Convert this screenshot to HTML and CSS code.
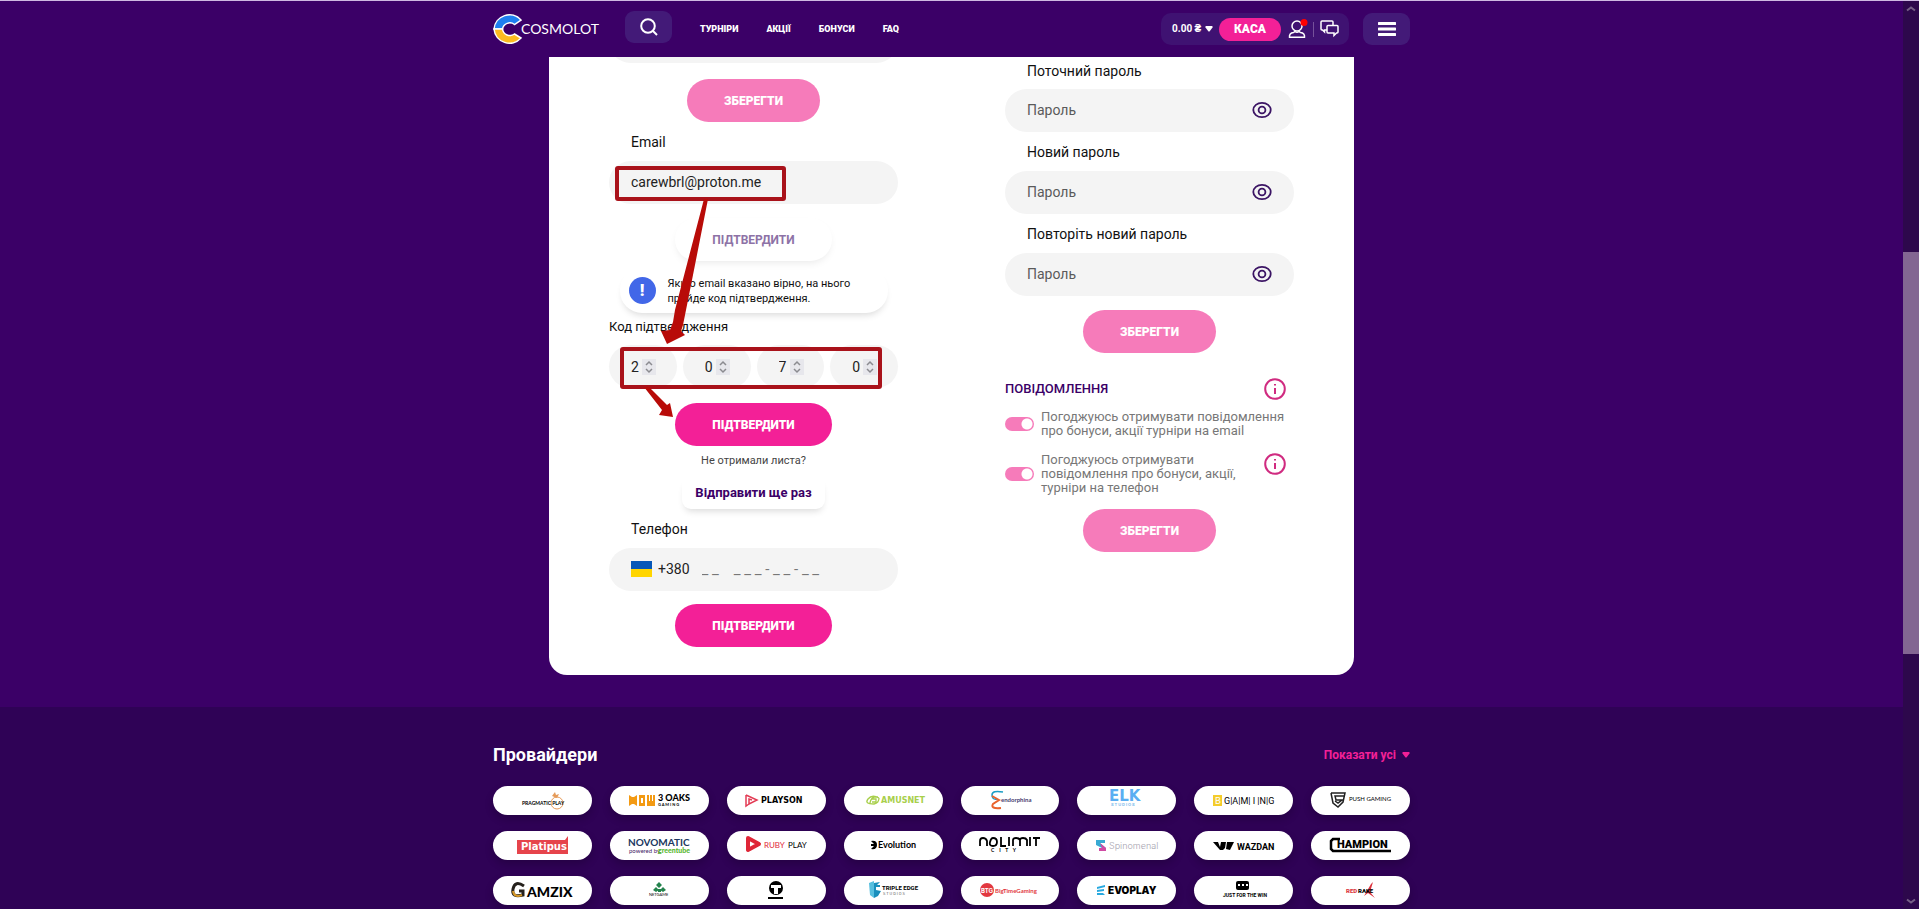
FILE: index.html
```html
<!DOCTYPE html>
<html lang="uk">
<head>
<meta charset="utf-8">
<title>Cosmolot</title>
<link rel="stylesheet" href="styles.css">
</head>
<body>
<svg class="sprite" aria-hidden="true">
  <symbol id="eye" viewBox="0 0 20 18"><ellipse cx="10" cy="9" rx="8.7" ry="7.2"/><circle cx="10" cy="9" r="3.4"/></symbol>
  <symbol id="info" viewBox="0 0 22 22"><circle cx="11" cy="11" r="9.8"/><path d="M11 10v6M11 6v1.6"/></symbol>
  <symbol id="spin" viewBox="0 0 14 16"><path d="M4 6l3-3 3 3M4 10l3 3 3-3"/></symbol>
</svg>
<header class="header">
  <div class="wrap header-row">
    <a class="logo" href="#">
      <svg width="30" height="34" viewBox="0 0 30 34"><path d="M28 8A15.500 15.500 0 0 0 1 17H9.500A7.500 7.500 0 0 1 21.500 12.500Z" fill="#1e7ff0" stroke="#fff"/><path d="M28 26A15.500 15.500 0 0 1 1 17H9.500A7.500 7.500 0 0 0 21.500 22Z" fill="#fdbb1f" stroke="#fff"/></svg>
      <span>COSMOLOT</span>
    </a>
    <button class="search" aria-label="Пошук"><svg width="18" height="18" viewBox="0 0 18 18"><circle cx="8" cy="8" r="6.800"/><path d="M13 13l4 4"/></svg></button>
    <nav class="nav"><a href="#">ТУРНІРИ</a><a href="#">АКЦІЇ</a><a href="#">БОНУСИ</a><a href="#">FAQ</a></nav>
    <div class="wallet">
      <button class="balance">0.00 ₴ <svg width="8" height="6" viewBox="0 0 8 6"><path d="M1 0H7Q8 0 7.500 1.500L4.500 5.500H3.500L.5 1.500Q0 0 1 0" fill="#fff"/></svg></button>
      <button class="cash">КАСА</button>
      <a class="user" href="#" aria-label="Профіль"><svg width="20" height="20" viewBox="0 0 20 20"><circle cx="9" cy="7" r="5"/><path d="M1.500 18.200H16.500Q17 14 12.500 13.500L11 12.500Q9 14 7 12.500L5.500 13.500Q1 14 1.500 18.200Z"/><circle class="dot" cx="16" cy="3.500" r="3.500"/></svg></a>
      <span class="divider"></span>
      <a class="chat" href="#" aria-label="Чат"><svg width="20" height="18" viewBox="0 0 20 18"><path d="M7 10H4.500V12L2.500 10H2Q1 10 1 9V2Q1 1 2 1H12Q13 1 13 2V5"/><path d="M8 5.500H17Q18 5.500 18 6.500V12Q18 13 17 13H16.500L14 15.500V13H8Q7 13 7 12V6.500Q7 5.500 8 5.500Z"/></svg></a>
    </div>
    <button class="menu" aria-label="Меню"><svg width="18" height="14" viewBox="0 0 18 14"><path d="M1 1.500H17M1 7H17M1 12.500H17"/></svg></button>
  </div>
</header>

<div class="page">
<main>
  <div class="card">
    <form class="col">
      <input class="field" aria-label="Дата народження">
      <button type="button" class="btn soft save">ЗБЕРЕГТИ</button>
      <label class="label" for="email">Email</label>
      <input class="field" id="email" type="email" value="carewbrl@proton.me">
      <button type="button" class="btn ghost" disabled>ПІДТВЕРДИТИ</button>
      <div class="alert"><span class="alert-icon">!</span><p>Якщо email вказано вірно, на нього прийде код підтвердження.</p></div>
      <div class="code-label" id="code-label">Код підтвердження</div>
      <div class="code" role="group" aria-labelledby="code-label">
        <span class="digit"><input type="number" aria-label="Цифра 1" value="2"><svg><use href="#spin"/></svg></span>
        <span class="digit"><input type="number" aria-label="Цифра 2" value="0"><svg><use href="#spin"/></svg></span>
        <span class="digit"><input type="number" aria-label="Цифра 3" value="7"><svg><use href="#spin"/></svg></span>
        <span class="digit"><input type="number" aria-label="Цифра 4" value="0"><svg><use href="#spin"/></svg></span>
      </div>
      <button type="button" class="btn confirm">ПІДТВЕРДИТИ</button>
      <p class="hint">Не отримали листа?</p>
      <button type="button" class="resend">Відправити ще раз</button>
      <label class="label" for="phone">Телефон</label>
      <div class="field phone">
        <svg width="21" height="16" viewBox="0 0 21 16"><path fill="#0757b8" d="M0 0H21V8H0Z"/><path fill="#ffd500" d="M0 8H21V16H0Z"/></svg>
        <span>+380</span>
        <input id="phone" type="tel" placeholder="_ _ &nbsp; &nbsp;_ _ _ - _ _ - _ _">
      </div>
      <button type="button" class="btn verify">ПІДТВЕРДИТИ</button>
      <svg class="marks" width="289" height="430" viewBox="0 0 289 430" aria-hidden="true">
        <rect x="8" y="168" width="167" height="31" rx="1"/>
        <rect x="13" y="349" width="258" height="38" rx="1"/>
        <path d="M95 199H99L84 275 74 325 72 331 76 335 58 344 52 331 61 330 64 322 66 310Z"/>
        <path d="M35 387L40 387 58 405 61 403 64 417 50 415 53 410Z"/>
      </svg>
    </form>

    <form class="col security">
      <label class="label" for="p1">Поточний пароль</label>
      <div class="field pass"><input id="p1" type="password" placeholder="Пароль"><button type="button" aria-label="Показати"><svg><use href="#eye"/></svg></button></div>
      <label class="label" for="p2">Новий пароль</label>
      <div class="field pass"><input id="p2" type="password" placeholder="Пароль"><button type="button" aria-label="Показати"><svg><use href="#eye"/></svg></button></div>
      <label class="label" for="p3">Повторіть новий пароль</label>
      <div class="field pass"><input id="p3" type="password" placeholder="Пароль"><button type="button" aria-label="Показати"><svg><use href="#eye"/></svg></button></div>
      <button type="button" class="btn soft update">ЗБЕРЕГТИ</button>
      <div class="notice-head"><h2>ПОВІДОМЛЕННЯ</h2><button type="button" class="info" aria-label="Інформація"><svg><use href="#info"/></svg></button></div>
      <div class="notice wide"><input type="checkbox" id="n1" checked><label for="n1">Погоджуюсь отримувати повідомлення про бонуси, акції турніри на email</label></div>
      <div class="notice"><input type="checkbox" id="n2" checked><label for="n2">Погоджуюсь отримувати повідомлення про бонуси, акції, турніри на телефон</label><button type="button" class="info" aria-label="Інформація"><svg><use href="#info"/></svg></button></div>
      <button type="button" class="btn soft update">ЗБЕРЕГТИ</button>
    </form>
  </div>
</main>

<section class="providers">
  <div class="wrap">
    <div class="providers-head"><h1>Провайдери</h1><a href="#">Показати усі <svg width="8" height="6" viewBox="0 0 8 6"><path d="M1 0H7Q8 0 7.500 1.500L4.500 5.500H3.500L.5 1.500Q0 0 1 0" fill="#f32097"/></svg></a></div>
    <div class="brands">
      <a href="#"><svg viewBox="0 0 99 29"><circle cx="64" cy="17" r="6" fill="none" stroke="#e59a58"/><path d="M59 10L62 6 63 9 66 8 64 12Z" fill="#e59a58"/><text x="29" y="19" class="lato b" font-size="5">PRAGMATIC PLAY</text></svg></a>
      <a href="#"><svg viewBox="0 0 99 29"><path d="M19 9L22 11H24L27 9V20L24 18H22L19 20ZM29 9H35V20H29ZM37 9H45V20H37Z" fill="#f39a13"/><path d="M31 12V17H33V12ZM39 9V15H40V9ZM42 9V15H43V9Z" fill="#fff"/><text x="48" y="15" class="lato x" font-size="9">3 OAKS</text><text x="48" y="20" class="lato b" font-size="4">G A M I N G</text></svg></a>
      <a href="#"><svg viewBox="0 0 99 29"><path d="M19 9L30 14 22 18V13L25 14M19 9V20L22 18" fill="none" stroke="#e33b54" stroke-width="1.500"/><text x="34" y="17" class="dejavu b" font-size="8">PLAYSON</text></svg></a>
      <a href="#"><svg viewBox="0 0 99 29"><path d="M35 12Q28 8 24 13T30 18Q35 17 35 12M34 11Q27 10 26 17M27 13H32V16H28" fill="none" stroke="#a8cf4b" stroke-width="1.300"/><text x="37" y="17" class="dejavu b" font-size="8" fill="#a8cf4b">AMUSNET</text></svg></a>
      <a href="#"><svg viewBox="0 0 99 29"><path d="M43 6Q32 4 32 9T37 13" fill="none" stroke="#1b9ec5" stroke-width="1.500"/><path d="M32 10L39 14 33 18Q30 23 41 22" fill="none" stroke="#e9632d" stroke-width="2"/><text x="41" y="16" class="lato b" font-size="6" fill="#473c70">endorphina</text></svg></a>
      <a href="#"><svg viewBox="0 0 99 29"><text x="32" y="15" class="dejavu b" font-size="15" fill="#5aaef2">ELK</text><text x="34" y="20" class="inter b" font-size="4" fill="#83bdec">S T U D I O S</text></svg></a>
      <a href="#"><svg viewBox="0 0 99 29"><path d="M19 9H28V20H19Z" fill="#f4cc2a"/><text x="21" y="18" class="inter" font-size="9" fill="#fff">B</text><text x="30" y="18" class="roboto" font-size="9">G|A|M| I |N|G</text></svg></a>
      <a href="#"><svg viewBox="0 0 99 29"><path d="M20 7H34L32 16 27 21 22 17 20 7M34 10H24L25 14H31L27 17 24 15" fill="none" stroke="#222" stroke-width="1.500"/><text x="38" y="15" class="lato" font-size="6">PUSH GAMING</text></svg></a>

      <a href="#"><svg viewBox="0 0 99 29"><path d="M24 9H72L75 5V23H24Z" fill="#e6444b"/><text x="28" y="19" class="dejavu b" font-size="10" fill="#fff">Platipus</text></svg></a>
      <a href="#"><svg viewBox="0 0 99 29"><text x="18" y="15" class="lato b" font-size="10" fill="#203760">NOVOMATIC</text><text x="19" y="22" class="lato" font-size="6" fill="#426">powered by</text><text x="48" y="22" class="lato x" font-size="7" fill="#55b62c">greentube</text></svg></a>
      <a href="#"><svg viewBox="0 0 99 29"><path d="M21 7L32 13 21 19Z" fill="none" stroke="#df2637" stroke-width="4" stroke-linejoin="round"/><text x="37" y="17" class="lato" font-size="8" fill="#df2637">RUBY</text><text x="61" y="17" class="lato" font-size="8">PLAY</text></svg></a>
      <a href="#"><svg viewBox="0 0 99 29"><path d="M27 10Q33 9 33 14T27 18L29 16 30 15H27V13H30L29 12Z"/><text x="34" y="17" class="lato b" font-size="9">Evolution</text></svg></a>
      <a href="#"><svg viewBox="0 0 99 29"><path d="M20 15V10Q20 7 23 7T27 10V15M33 7Q37 7 37 11T33 15 30 11 33 7M41 6V15H46M49 6V15M53 15V9Q53 7 56 7T60 9V15M60 9Q60 7 63 7T67 9V15M70 6V15M73 7H80M76 7V15" fill="none" stroke="#000" stroke-width="1.800"/><text x="31" y="21" class="lato b" font-size="5">C &#160; &#160;I &#160; &#160;T &#160; &#160;Y</text></svg></a>
      <a href="#"><svg viewBox="0 0 99 29"><path d="M19 9H28V12H23L29 17V20H22V17H25L19 14Z" fill="#38a9d3"/><path d="M23 12L29 17V20H22V17H25Z" fill="#d04aa3"/><text x="32" y="18" class="inter thin" font-size="9" fill="#a6a3af">Spinomenal</text></svg></a>
      <a href="#"><svg viewBox="0 0 99 29"><path d="M19 11H24L26 16 27 11H32L31 17 29 19H26ZM33 11H40L36 19 32 18Z"/><text x="43" y="19" class="roboto b" font-size="9">WAZDAN</text></svg></a>
      <a href="#"><svg viewBox="0 0 99 29"><path d="M29 8H22L20 10V18L22 20H80" fill="none" stroke="#000" stroke-width="2.500"/><text x="26" y="17" class="roboto x" font-size="11">HAMPION</text></svg></a>

      <a href="#"><svg viewBox="0 0 99 29"><path d="M31 10Q22 4 20 13T30 19V15H26" fill="none" stroke="#26211c" stroke-width="3"/><path d="M20 15Q21 22 29 19" fill="none" stroke="#d69827" stroke-width="2"/><text x="34" y="21" class="lato x" font-size="14">AMZIX</text></svg></a>
      <a href="#"><svg viewBox="0 0 99 29"><path d="M49 6L52 9 49 12 46 9ZM46 11L49 14 46 16 43 14ZM53 11L56 14 53 16 50 14ZM48 13H51V16H48Z" fill="#24834d"/><text x="39" y="20" class="lato" font-size="4">NETGAME</text></svg></a>
      <a href="#"><svg viewBox="0 0 99 29"><circle cx="49" cy="12" r="7"/><path d="M44 9H54V12H51V18H47V12H44Z" fill="#fff"/><path d="M41 21H56V23H41Z"/></svg></a>
      <a href="#"><svg viewBox="0 0 99 29"><path d="M25 7L30 5V22L26 19Z" fill="#57bfdf"/><path d="M30 7L36 6 33 9H36V11H32V14L37 15 34 20 30 22Z" fill="#198fbd"/><text x="38" y="14" class="roboto b" font-size="6">TRIPLE EDGE</text><text x="39" y="19" class="roboto" font-size="4" fill="#666">S T U D I O S</text></svg></a>
      <a href="#"><svg viewBox="0 0 99 29"><circle cx="27" cy="14" r="7" fill="#e23840"/><text x="21" y="17" class="inter b" font-size="6" fill="#fff">BTG</text><text x="35" y="17" class="lato b" font-size="6" fill="#e23840">BigTimeGaming</text></svg></a>
      <a href="#"><svg viewBox="0 0 99 29"><path d="M20 11L28 9V11L20 13ZM20 14L27 13V15L20 16ZM20 17H26L28 19H20Z" fill="#28a9df"/><text x="31" y="18" class="inter x" font-size="10">EVOPLAY</text></svg></a>
      <a href="#"><svg viewBox="0 0 99 29"><rect x="42" y="5" width="13" height="9" rx="2"/><path d="M44 9H46M48 9H50M52 9H54" stroke="#fff" stroke-width="2"/><text x="29" y="21" class="roboto b" font-size="5">JUST FOR THE WIN</text></svg></a>
      <a href="#"><svg viewBox="0 0 99 29"><path d="M53 20L60 8 62 6 59 16 64 22 57 17" fill="#db333e"/><text x="35" y="17" class="roboto x" font-size="6" fill="#db333e">RED</text><text x="47" y="17" class="roboto x" font-size="6">RAKE</text></svg></a>
    </div>
  </div>
</section>
</div>
<div class="scroll" aria-hidden="true"><svg width="16" height="16" viewBox="0 0 16 16"><path d="M4 9.500L8 6.500 12 9.500"/></svg><span class="thumb"></span><svg width="16" height="16" viewBox="0 0 16 16"><path d="M4 6.500L8 9.500 12 6.500"/></svg></div>
</body>
</html>
```
FILE: styles.css
```css
* { box-sizing: border-box; }
body { margin: 0; height: 100vh; overflow: hidden; background: #3b0067; color: #111; font-family: Roboto, "Liberation Sans", sans-serif; font-size: 14px; line-height: 20px; }
button, input { font: inherit; border: 0; margin: 0; padding: 0; background: none; }
a { color: inherit; text-decoration: none; }
p, h1, h2 { margin: 0; }
svg { display: block; flex: none; }
.sprite { position: absolute; width: 0; height: 0; }
.wrap { width: 100%; max-width: 917px; margin: 0 auto; }
.page { margin-right: 16px; height: 100vh; display: flex; flex-direction: column; }

.header { position: fixed; z-index: 5; top: 0; left: 0; right: 16px; height: 57px; background: #3b0067; border-top: 1px solid #cfb9e2; color: #fff; }
.header-row { display: flex; align-items: center; height: 56px; }
.logo { display: flex; align-items: center; width: 132px; font: 14px/20px Lato, sans-serif; }
.logo span { margin-left: -2px; }
.search, .menu { display: flex; align-items: center; justify-content: center; width: 47px; height: 32px; border-radius: 9px; background: #431a78; }
.search { margin-bottom: 4px; }
.header svg { fill: none; stroke: #fff; stroke-width: 1.5; }
.header .search svg { stroke-width: 2; }
.header .menu svg { stroke-width: 3; stroke-linecap: round; }
.header .balance svg { stroke: none; }
.nav { display: flex; gap: 28px; margin-left: 28px; font-size: 9px; font-weight: 900; }
.wallet { display: flex; align-items: center; width: 188px; height: 32px; margin: 0 14px 0 auto; padding-left: 11px; border-radius: 10px; background: #3f1272; }
.balance { display: flex; align-items: center; gap: 4px; width: 47px; color: #fff; font-size: 10px; font-weight: 700; white-space: nowrap; }
.cash { width: 62px; height: 23px; border-radius: 12px; background: #f32097; color: #fff; font-size: 12px; font-weight: 900; }
.user { margin-left: 7px; }
.header .dot { fill: #f00; stroke: none; }
.divider { width: 1px; height: 15px; margin: 0 6px 0 5px; background: #75519a; }

main { padding-bottom: 32px; }
.card { display: grid; grid-template-columns: repeat(2, minmax(0, 1fr)); gap: 107px; width: 100%; max-width: 805px; margin: 0 auto; padding: 0 60px 28px; background: #fff; border-radius: 0 0 18px 18px; }
.col { position: relative; display: flex; flex-direction: column; align-items: center; padding-top: 20px; }
.security { padding-top: 61px; }
.field { width: 100%; height: 43px; padding: 0 22px 1px; border-radius: 22px; background: #f4f4f4; color: #222; }
.label { align-self: flex-start; margin: 10px 22px 9px; color: #111; }
.security .label:first-child { margin-top: 0; margin-bottom: 8px; }
.btn { height: 43px; padding: 0 37px; border-radius: 22px; background: #f32097; color: #fff; font-size: 12px; font-weight: 900; white-space: nowrap; }
.soft { background: #f67bba; }
.save { margin-top: 16px; }
.ghost { margin-top: 14px; background: #fff; color: #8d72a6; font-weight: 700; box-shadow: 0 4px 8px -3px #0000001a; }
.alert { display: flex; align-items: center; gap: 12px; width: 268px; height: 45px; margin-top: 7px; padding: 0 9px; border-radius: 22px; font-size: 11px; line-height: 15px; box-shadow: 0 5px 7px -3px #00000026; }
.alert p { flex: 1; }
.alert-icon { width: 27px; height: 27px; flex: none; border-radius: 50%; background: #4267e8; color: #fff; font-size: 17px; font-weight: 900; line-height: 27px; text-align: center; }
.code-label { align-self: flex-start; margin: 4px 0 8px; font-size: 13px; }
.code { display: grid; grid-template-columns: repeat(4, 1fr); gap: 6px; width: 100%; }
.digit { display: flex; align-items: center; gap: 2px; height: 43px; padding-left: 22px; border-radius: 22px; background: #f4f4f4; }
.digit input { width: 9px; color: #222; appearance: textfield; }
.digit input::-webkit-inner-spin-button { appearance: none; margin: 0; }
.digit svg { width: 14px; height: 16px; background: #e7e7ec; fill: none; stroke: #8b8b90; stroke-width: 1.5; }
.confirm { margin-top: 15px; }
.hint { margin: 5px 0 6px; color: #444; font-size: 11px; }
.resend { height: 32px; padding: 0 13px; border-radius: 9px; color: #3b0067; font-size: 13px; font-weight: 700; white-space: nowrap; box-shadow: 0 5px 7px -3px #00000026; }
.phone { display: flex; align-items: center; gap: 6px; }
.phone input { flex: 1; min-width: 0; margin-left: 6px; font-size: 15px; }
.phone input::placeholder { color: #777; }
.verify { margin-top: 13px; }
.marks { position: absolute; top: 0; left: 0; fill: #b80b08; }
.marks rect { fill: none; stroke: #a9121a; stroke-width: 4; }

.pass { display: flex; align-items: center; }
.pass input { flex: 1; min-width: 0; }
.pass input::placeholder { color: #5a5a5a; }
.pass svg { width: 20px; height: 18px; fill: none; stroke: #3b1464; stroke-width: 1.8; }
.update { margin-top: 14px; }
.notice-head { display: flex; align-items: center; justify-content: space-between; width: 100%; height: 22px; margin-top: 25px; padding-right: 8px; }
h2 { color: #3b0067; font-size: 13px; font-weight: 500; }
.info svg { width: 22px; height: 22px; fill: none; stroke: #d02b80; stroke-width: 2; }
.notice { display: flex; align-items: center; width: 100%; margin-top: 10px; padding-right: 8px; color: #777; font-size: 13px; line-height: 14px; }
.notice + .notice { margin-top: 15px; }
.wide { padding-right: 0; }
.notice label { flex: 1; margin-left: 7px; }
.notice .info { align-self: flex-start; margin-left: 20px; }
.notice input { appearance: none; width: 29px; height: 14px; border-radius: 7px; background: radial-gradient(circle at 22px 7px, #fff 5px, #f67bba 6px); }

.providers { flex: 1; padding-top: 37px; background: #2f0256; color: #fff; }
.providers-head { display: flex; align-items: center; justify-content: space-between; height: 22px; margin-bottom: 20px; }
h1 { font-size: 18px; font-weight: 700; }
.providers-head a { display: flex; align-items: center; gap: 6px; color: #f32097; font-size: 12px; font-weight: 700; }
.brands { display: grid; grid-template-columns: repeat(8, 1fr); gap: 16px 18px; }
.brands a { display: flex; justify-content: center; height: 29px; overflow: hidden; border-radius: 15px; background: #fff; box-shadow: 0 4px 8px #0003; }
.brands svg { width: 99px; height: 29px; }
.lato { font-family: Lato, sans-serif; }
.inter { font-family: Inter, sans-serif; }
.roboto { font-family: Roboto, sans-serif; }
.dejavu { font-family: "DejaVu Sans", sans-serif; }
.b { font-weight: 700; }
.x { font-weight: 900; }
.thin { font-weight: 300; }

.scroll { position: fixed; inset: 0 0 0 auto; width: 16px; display: flex; flex-direction: column; background: #2d084c; border-top: 1px solid #cfb9e2; }
.scroll::before { content: ""; order: 1; flex: 235; }
.scroll::after { content: ""; order: 3; flex: 239; }
.scroll svg { fill: none; stroke: #766087; stroke-width: 2; }
.scroll svg:last-child { order: 4; }
.thumb { order: 2; flex: 402; background: #836692; }
```
